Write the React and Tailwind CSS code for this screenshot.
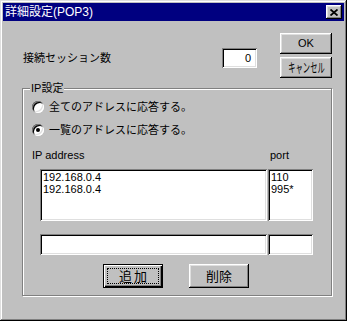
import React from 'react';

const raised = 'bg-[#c0c0c0] shadow-[inset_-1px_-1px_#000,inset_1px_1px_#fff,inset_-2px_-2px_#808080,inset_2px_2px_#dfdfdf]';
const sunken = 'bg-white shadow-[inset_1px_1px_#808080,inset_-1px_-1px_#fff,inset_2px_2px_#000,inset_-2px_-2px_#dfdfdf]';

const Radio = ({ checked, label }) => (
  <div className="flex items-center gap-[5px] pl-[9px] h-[14px]">
    <div className="w-[12px] h-[12px] rounded-full bg-white flex items-center justify-center shadow-[inset_1px_1px_#808080,inset_-1px_-1px_#fff,inset_2px_2px_#000,inset_-2px_-2px_#dfdfdf]">
      {checked && <div className="w-[4px] h-[4px] rounded-full bg-black"></div>}
    </div>
    <span className="text-[11px] leading-[14px]">{label}</span>
  </div>
);

const App = () => {
  return (
    <div className="w-[347px] h-[321px] bg-[#c0c0c0] p-[3px] text-black font-['Liberation_Sans','Noto_Sans_CJK_JP',sans-serif] shadow-[inset_-1px_-1px_#000,inset_1px_1px_#dfdfdf,inset_-2px_-2px_#808080,inset_2px_2px_#fff]">
      {/* title bar */}
      <div className="h-[18px] bg-[#000080] flex items-center justify-between pl-[2px] pr-[2px]">
        <span className="text-white text-[12px] leading-[18px]">詳細設定(POP3)</span>
        <div className={`w-[16px] h-[14px] flex items-center justify-center ${raised}`}>
          <svg width="8" height="7" viewBox="0 0 8 7">
            <path d="M0.5 0.5 L7.5 6.5 M7.5 0.5 L0.5 6.5" stroke="#000" strokeWidth="1.8" fill="none" />
          </svg>
        </div>
      </div>

      {/* session count + buttons */}
      <div className="flex pt-[12px]">
        <div className="flex items-start pt-[15px] pl-[20px]">
          <span className="w-[199px] text-[11px] leading-[20px]">接続セッション数</span>
          <div className={`w-[35px] h-[20px] text-right pr-[6px] text-[11px] leading-[20px] ${sunken}`}>0</div>
        </div>
        <div className="flex flex-col gap-[3px] ml-[23px]">
          <div className={`w-[52px] h-[21px] flex items-center justify-center text-[11px] ${raised}`}>OK</div>
          <div className={`w-[52px] h-[21px] flex items-center justify-center text-[13px] whitespace-nowrap overflow-hidden ${raised}`}>
            <span className="inline-block scale-x-[0.56]">キャンセル</span>
          </div>
        </div>
      </div>

      {/* IP settings group */}
      <div className="relative mt-[10px] ml-[19px] w-[310px] border border-[#808080] shadow-[inset_1px_1px_#fff,1px_1px_#fff] pt-[11px] pb-[7px]">
        <span className="absolute top-[-8px] left-[7px] px-[1px] bg-[#c0c0c0] text-[11px] leading-[14px]">IP設定</span>
        <Radio label="全てのアドレスに応答する。" />
        <div className="mt-[9px]">
          <Radio checked label="一覧のアドレスに応答する。" />
        </div>
        <div className="flex mt-[11px] h-[14px] pl-[9px] text-[11px] leading-[14px]">
          <span className="w-[238px]">IP address</span>
          <span>port</span>
        </div>
        <div className="flex gap-[1px] ml-[17px] mt-[7px]">
          <div className={`w-[227px] h-[52px] pl-[3px] pt-[2px] text-[11px] leading-[12px] ${sunken}`}>
            <div>192.168.0.4</div>
            <div>192.168.0.4</div>
          </div>
          <div className={`w-[45px] h-[52px] pl-[3px] pt-[2px] text-[11px] leading-[12px] ${sunken}`}>
            <div>110</div>
            <div>995*</div>
          </div>
        </div>
        <div className="flex gap-[1px] ml-[17px] mt-[13px]">
          <div className={`w-[227px] h-[21px] ${sunken}`}></div>
          <div className={`w-[45px] h-[21px] ${sunken}`}></div>
        </div>
        <div className="flex gap-[26px] ml-[80px] mt-[9px]">
          <div className="w-[60px] h-[24px] border border-black bg-[#c0c0c0] shadow-[inset_1px_1px_#fff,inset_-1px_-1px_#000,inset_-2px_-2px_#808080] p-[3px]">
            <div className="w-full h-full border border-dotted border-black flex items-center justify-center text-[13px] leading-none tracking-[2px] pl-[2px]">追加</div>
          </div>
          <div className={`w-[60px] h-[24px] flex items-center justify-center text-[13px] leading-none ${raised}`}>削除</div>
        </div>
      </div>
    </div>
  );
};

export default App;
